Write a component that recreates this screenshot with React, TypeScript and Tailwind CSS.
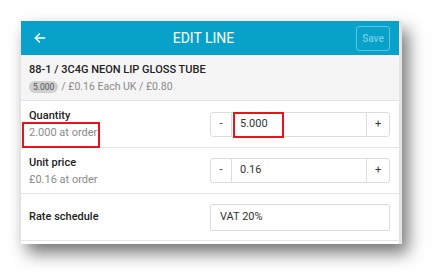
import React from "react";

export default function App() {
  return (
    <div
      className="w-[444px] h-[277px] bg-white pl-[21px] pt-[21px]"
      style={{ fontFamily: "Roboto, 'Liberation Sans', sans-serif" }}
    >
      <div className="relative w-[381px] h-[223px] bg-white flex shadow-[6px_9px_16px_rgba(0,0,0,0.55)]">
        <div className="flex-1 flex flex-col">
          <div className="h-[34px] bg-[#08a1c9] flex items-center pl-[12px] pr-[9px]">
            <svg width="14" height="14" viewBox="0 0 24 24" fill="none" stroke="white" strokeWidth="2.6" strokeLinecap="round" strokeLinejoin="round">
              <path d="M20 12H4" />
              <path d="M11 5l-7 7 7 7" />
            </svg>
            <div className="flex-1 text-center text-white text-[14px] leading-none pl-[4px]">EDIT LINE</div>
            <div className="w-[34px] h-[25px] border border-[#5fc4df] rounded-[3px] flex items-center justify-center text-[10px] font-medium text-[#74cde5]">
              Save
            </div>
          </div>
          <div className="h-[46px] bg-[#f5f5f5] border-b border-[#e2e2e2] pl-[8px] pt-[8px]">
            <div className="text-[11px] font-medium text-[#222] leading-[13px]">
              88-1 / 3C4G NEON LIP GLOSS TUBE
            </div>
            <div className="flex items-center mt-[5px] text-[10.5px] text-[#8a8a8a] leading-[12px]">
              <span className="bg-[#cfcfcf] text-[#555] rounded-full px-[4px] text-[8.5px] leading-[12px]">5.000</span>
              <span className="ml-[3px]">/ £0.16 Each UK / £0.80</span>
            </div>
          </div>
          <div className="h-[47px] border-b border-[#e6e6e6] flex items-center pl-[8px] pr-[9px]">
            <div className="flex-1 flex flex-col pt-[1px]">
              <div className="text-[11px] font-medium text-[#222] leading-[14px]">Quantity</div>
              <div className="text-[11px] text-[#8a8a8a] leading-[14px] mt-[3px]">2.000 at order</div>
            </div>
            <div className="w-[180px] h-[25px] flex border border-[#dcdcdc] rounded-[3px] text-[11px] text-[#333]">
              <div className="w-[21px] flex items-center justify-center border-r border-[#dcdcdc]">-</div>
              <div className="flex-1 flex items-center pl-[8px]">5.000</div>
              <div className="w-[23px] flex items-center justify-center border-l border-[#dcdcdc]">+</div>
            </div>
          </div>
          <div className="h-[46px] border-b border-[#e6e6e6] flex items-center pl-[8px] pr-[9px]">
            <div className="flex-1 flex flex-col pt-[1px]">
              <div className="text-[11px] font-medium text-[#222] leading-[14px]">Unit price</div>
              <div className="text-[11px] text-[#8a8a8a] leading-[14px] mt-[3px]">£0.16 at order</div>
            </div>
            <div className="w-[180px] h-[25px] flex border border-[#dcdcdc] rounded-[3px] text-[11px] text-[#333]">
              <div className="w-[21px] flex items-center justify-center border-r border-[#dcdcdc]">-</div>
              <div className="flex-1 flex items-center pl-[8px]">0.16</div>
              <div className="w-[23px] flex items-center justify-center border-l border-[#dcdcdc]">+</div>
            </div>
          </div>
          <div className="h-[47px] border-b border-[#e6e6e6] flex items-center pl-[8px] pr-[9px]">
            <div className="flex-1 text-[11px] font-medium text-[#222]">Rate schedule</div>
            <div className="w-[180px] h-[27px] flex items-center border border-[#dcdcdc] rounded-[2px] pl-[9px] text-[11px] text-[#333]">
              VAT 20%
            </div>
          </div>
        </div>
        <div className="w-[3px] bg-[#e4e4e4]" />
        <div className="absolute left-[1px] top-[101px] w-[78px] h-[26px] border-[2px] border-[#e8141c]" />
        <div className="absolute left-[212px] top-[91px] w-[51px] h-[26px] border-[2px] border-[#e8141c]" />
      </div>
    </div>
  );
}
